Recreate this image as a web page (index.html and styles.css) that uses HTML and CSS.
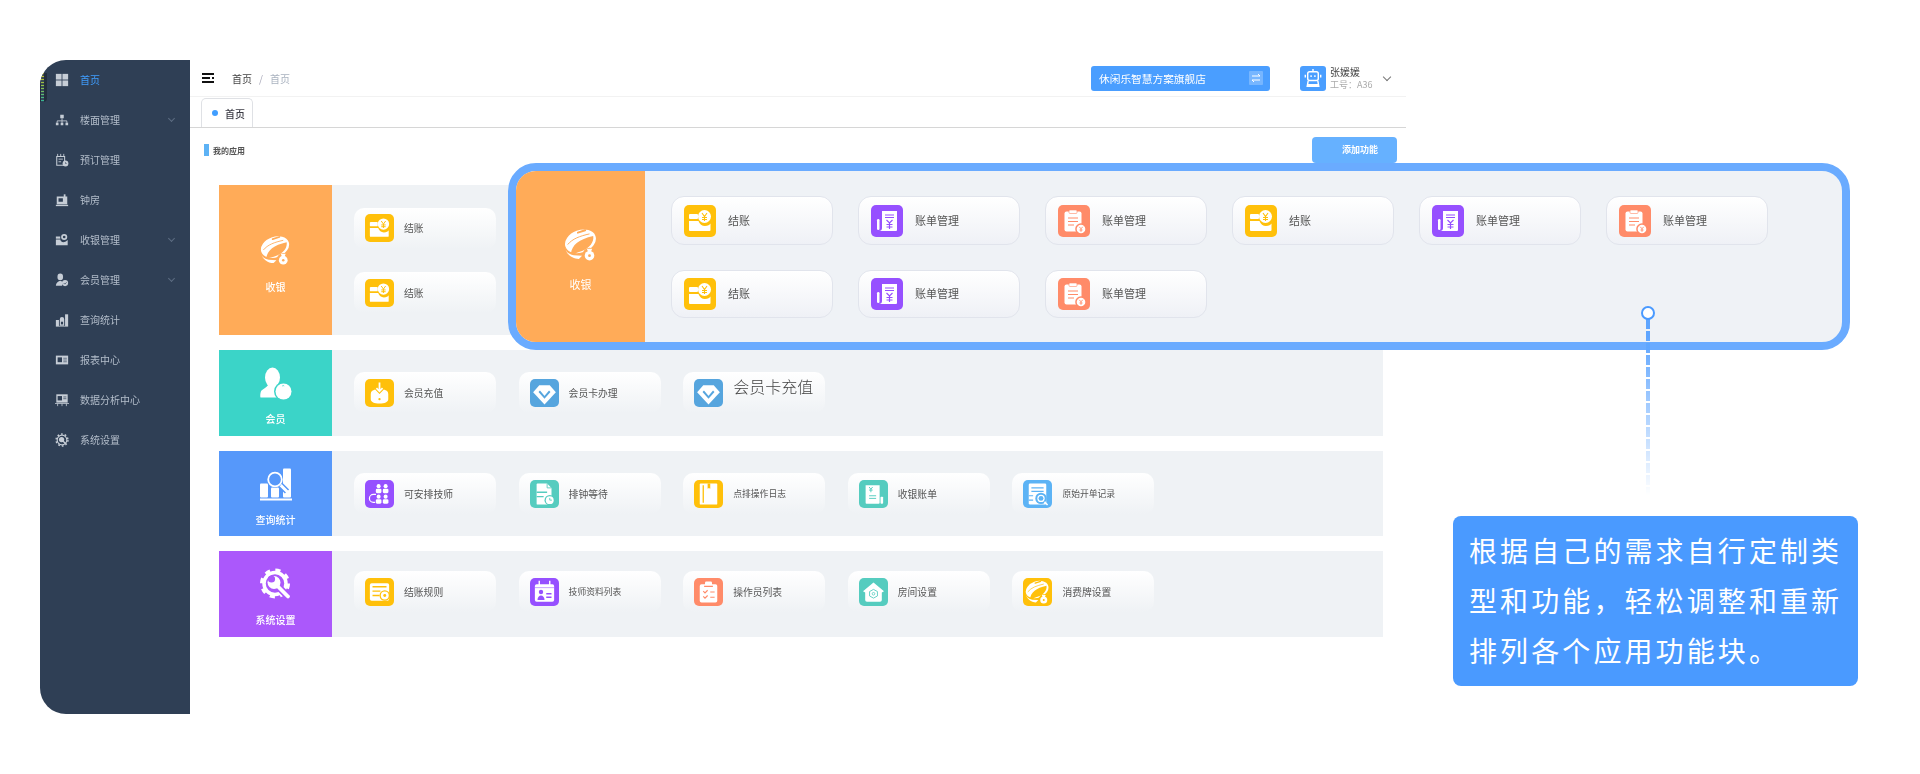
FILE: index.html
```html
<!DOCTYPE html>
<html lang="zh-CN">
<head>
<meta charset="utf-8">
<title>首页</title>
<link rel="stylesheet" href="styles.css">
</head>
<body>
<svg class="defs" xmlns="http://www.w3.org/2000/svg">
  <symbol id="wallet" viewBox="0 0 32 32">
    <rect x="5" y="9" width="9" height="5" rx="1" fill="#fff"/>
    <path d="M5 16h9.500c1 3 3.500 5 6.500 5s4.500-1 5.500-2.500V25a1 1 0 0 1-1 1H6a1 1 0 0 1-1-1z" fill="#fff"/>
    <circle cx="20.500" cy="11.500" r="6.500" fill="#fff"/>
    <path d="M18 8l2.500 3.500L23 8M20.500 11.500V16M18 12.500h5M18 14.500h5" fill="none" stroke="currentColor" stroke-width="1.100"/>
  </symbol>
  <symbol id="bill" viewBox="0 0 32 32">
    <path d="M11 6h15v19a1 1 0 0 1-1 1H8c2 0 3-1 3-3z" fill="#fff"/>
    <rect x="6" y="14" width="2.500" height="11" rx="1.200" fill="#fff"/>
    <path d="M14 10h9M14 12.500h9M15.500 15l3 3 3-3M18.500 18v6M15.500 19.500h6M15.500 22h6" fill="none" stroke="currentColor" stroke-width="1.200"/>
  </symbol>
  <symbol id="clip" viewBox="0 0 32 32">
    <rect x="6.500" y="6.500" width="17" height="20" rx="2" fill="#fff"/>
    <rect x="11" y="5" width="8" height="3.500" rx="1" fill="#fff" stroke="currentColor" stroke-width=".6"/>
    <path d="M10 13h10M10 16.500h10M10 20h6" stroke="currentColor" stroke-width="1.200"/>
    <circle cx="23" cy="24" r="5.800" fill="currentColor"/>
    <circle cx="23" cy="24" r="4.300" fill="#fff"/>
    <path d="M21.300 21.800l1.700 2 1.700-2M23 23.800v3M21.500 25h3" fill="none" stroke="currentColor" stroke-width=".9"/>
  </symbol>
  <symbol id="bracelet" viewBox="0 0 32 32">
    <ellipse cx="15.500" cy="13.500" rx="15" ry="10.500" transform="rotate(-20 15.500 13.500)" fill="#fff"/>
    <path d="M6.500 25C7.500 17 14 11.500 27.500 8.500 28.500 14 24 20 17 22.500 13 24 10 25 6.500 25z" fill="currentColor"/>
    <path d="M3.500 16.500C8 11 15 8.500 24 6.500" fill="none" stroke="currentColor" stroke-width=".9"/>
    <rect x="12" y="3.300" width="9" height="1.800" rx=".9" transform="rotate(-18 16.500 4.200)" fill="currentColor"/>
    <path d="M1 19c.5 4 3 6.500 8 7.500l8 .5-3 3C8 30 2 26 1 19z" fill="#fff"/>
    <circle cx="24" cy="26" r="6.500" fill="currentColor"/>
    <circle cx="24" cy="27" r="4.500" fill="#fff"/>
    <path d="M21.500 20.500h5l-1.200 3h-2.600z" fill="#fff"/>
    <circle cx="24" cy="27" r="1.300" fill="currentColor"/>
  </symbol>
  <symbol id="member" viewBox="0 0 32 32">
    <ellipse cx="12.500" cy="10" rx="7.500" ry="10" fill="#fff"/>
    <path d="M.5 30c-.5-2 0-6 1-7 2-2 5-3 7-6h8c1 1 2 2 3 2-2 3-3 7-1 11z" fill="#fff"/>
    <circle cx="23.500" cy="24" r="9.500" fill="currentColor"/>
    <circle cx="23.500" cy="24" r="8" fill="#fff"/>
    <path d="M22.200 18.500a1.500 1.500 0 0 1 2 0" stroke="currentColor" fill="none" stroke-width=".8"/>
  </symbol>
  <symbol id="chartmag" viewBox="0 0 32 32">
    <rect x="0" y="15" width="8" height="14" rx="1" fill="#fff"/>
    <rect x="11" y="19" width="8" height="10" rx="1" fill="#fff"/>
    <rect x="23" y="0" width="8" height="29" rx="1" fill="#fff"/>
    <rect x="0" y="30" width="32" height="2" fill="#fff"/>
    <path d="M20 16l7 7" stroke="currentColor" stroke-width="6"/>
    <path d="M20 16l7 7" stroke="#fff" stroke-width="3" stroke-linecap="round"/>
    <circle cx="15" cy="11" r="8" fill="currentColor"/>
    <circle cx="15" cy="11" r="6.800" fill="none" stroke="#fff" stroke-width="1.800"/>
  </symbol>
  <symbol id="gear" viewBox="0 0 32 32">
    <circle cx="15" cy="15" r="11" fill="none" stroke="#fff" stroke-width="3.500"/>
    <circle cx="15" cy="15" r="13" fill="none" stroke="#fff" stroke-width="4" stroke-dasharray="5 5.200"/>
    <path d="M19 19l9 9" stroke="currentColor" stroke-width="7"/>
    <path d="M18 18l10 10" stroke="#fff" stroke-width="3.800" stroke-linecap="round"/>
    <circle cx="14" cy="14" r="6.500" fill="#fff"/>
    <circle cx="11.500" cy="10.500" r="3.600" fill="currentColor"/>
  </symbol>
  <symbol id="tray" viewBox="0 0 32 32">
    <path d="M6 17c0-3 2-4 5-5l5 5 5-5c3 1 5 2 5 5v6c0 3-4 5-10 5s-10-2-10-5z" fill="#fff"/>
    <path d="M16 4v10M12.500 10.500L16 14l3.500-3.500" fill="none" stroke="#fff" stroke-width="2"/>
    <circle cx="16" cy="23" r="1.300" fill="currentColor"/>
  </symbol>
  <symbol id="diamond" viewBox="0 0 32 32">
    <path d="M10 7h12l7 8-13 14L3 15z" fill="#fff"/>
    <path d="M10 14l6 7 6-7" fill="none" stroke="currentColor" stroke-width="2.200"/>
  </symbol>
  <symbol id="people" viewBox="0 0 32 32">
    <g fill="#fff">
      <circle cx="15" cy="7" r="2.300"/><circle cx="23" cy="7" r="2.300"/>
      <rect x="11.800" y="10" width="6.400" height="5" rx="1.500"/><rect x="19.800" y="10" width="6.400" height="5" rx="1.500"/>
      <circle cx="15" cy="19" r="2.300"/><circle cx="23" cy="19" r="2.300"/>
      <rect x="11.800" y="22" width="6.400" height="5" rx="1.500"/><rect x="19.800" y="22" width="6.400" height="5" rx="1.500"/>
    </g>
    <path d="M12 16.500H9a4.500 4.500 0 0 0 0 9h2" fill="none" stroke="#fff" stroke-width="1.400"/>
  </symbol>
  <symbol id="docclock" viewBox="0 0 32 32">
    <path d="M8 4h11l5 5v18a1 1 0 0 1-1 1H8a1 1 0 0 1-1-1V5a1 1 0 0 1 1-1z" fill="#fff"/>
    <path d="M19 4v5h5" fill="none" stroke="currentColor" stroke-width="1"/>
    <path d="M7 14h12M7 19h8" stroke="currentColor" stroke-width="1.600"/>
    <circle cx="22" cy="23" r="6" fill="currentColor"/>
    <circle cx="22" cy="23" r="4.500" fill="#fff"/>
    <path d="M22 20.500V23h2.500" fill="none" stroke="currentColor" stroke-width="1"/>
  </symbol>
  <symbol id="cardmark" viewBox="0 0 32 32">
    <rect x="6" y="4" width="20" height="24" rx="1" fill="#fff"/>
    <path d="M10 6v20" stroke="currentColor" stroke-width="1.500"/>
    <path d="M15 4h3v6l-1.500-1-1.500 1z" fill="currentColor"/>
  </symbol>
  <symbol id="receipt" viewBox="0 0 32 32">
    <path d="M7 6h16v20a1 1 0 0 1-1 1H8a1 1 0 0 1-1-1z" fill="#fff"/>
    <rect x="24" y="19" width="3" height="8" rx="1" fill="#fff"/>
    <path d="M11 8l2 2.500 2-2.500M13 10.500V14M11 11.500h4M11 18h8M11 21h8" fill="none" stroke="currentColor" stroke-width="1.100"/>
  </symbol>
  <symbol id="docsearch" viewBox="0 0 32 32">
    <rect x="6" y="4" width="20" height="24" rx="1.500" fill="#fff"/>
    <path d="M9 9h14M9 13h14M6 18h5M6 23h5" stroke="currentColor" stroke-width="1.300"/>
    <circle cx="20" cy="21" r="6.500" fill="currentColor"/>
    <circle cx="20" cy="21" r="4.200" fill="#fff"/>
    <circle cx="20" cy="21" r="2.800" fill="currentColor"/>
    <path d="M24 25l3.500 3.500" stroke="#fff" stroke-width="1.800"/>
  </symbol>
  <symbol id="listcoin" viewBox="0 0 32 32">
    <rect x="5" y="6" width="22" height="20" rx="2" fill="#fff"/>
    <path d="M8 10h16M8 15h9M8 20h8" stroke="currentColor" stroke-width="1.600"/>
    <circle cx="22" cy="20" r="6" fill="currentColor"/>
    <circle cx="22" cy="20" r="4.500" fill="#fff"/>
    <circle cx="22" cy="20" r="1.700" fill="currentColor"/>
  </symbol>
  <symbol id="calperson" viewBox="0 0 32 32">
    <rect x="5" y="7" width="22" height="20" rx="2" fill="#fff"/>
    <path d="M10 3v8M22 3v8" stroke="#fff" stroke-width="1.600"/>
    <path d="M5 11h22" stroke="currentColor" stroke-width=".6"/>
    <circle cx="12" cy="16" r="2.500" fill="currentColor"/>
    <path d="M8 25c0-3 2-5 4-5s4 2 4 5z" fill="currentColor"/>
    <path d="M18 18h6M18 22h6" stroke="currentColor" stroke-width="1.500"/>
  </symbol>
  <symbol id="clipcheck" viewBox="0 0 32 32">
    <rect x="6" y="7" width="20" height="21" rx="2" fill="#fff"/>
    <rect x="12" y="4" width="8" height="5" rx="1.500" fill="#fff"/>
    <path d="M10 15l2 2 3-3M10 21l2 2 3-3M18 16h5M18 22h5M11 9.500h10" fill="none" stroke="currentColor" stroke-width="1.300"/>
  </symbol>
  <symbol id="house" viewBox="0 0 32 32">
    <path d="M16 5L28 15l-2.500 1.500V25a2 2 0 0 1-2 2h-15a2 2 0 0 1-2-2v-8.500L4 15z" fill="#fff"/>
    <path d="M16 13l4.500 2.500v5L16 23l-4.500-2.500v-5z" fill="none" stroke="currentColor" stroke-width="1"/>
    <circle cx="16" cy="18" r="1.500" fill="none" stroke="currentColor" stroke-width=".9"/>
  </symbol>
  <symbol id="grid" viewBox="0 0 16 16">
    <rect x="1" y="1" width="6.500" height="6.500" fill="currentColor"/><rect x="8.500" y="1" width="6.500" height="6.500" fill="currentColor"/>
    <rect x="1" y="8.500" width="6.500" height="6.500" fill="currentColor"/><rect x="8.500" y="8.500" width="6.500" height="6.500" fill="currentColor"/>
  </symbol>
  <symbol id="org" viewBox="0 0 16 16">
    <rect x="6" y="2" width="4" height="4" fill="currentColor"/>
    <path d="M8 6v3M2.500 11V9h11v2M8 9v2" fill="none" stroke="currentColor"/>
    <rect x="1" y="11" width="3" height="3" fill="currentColor"/><rect x="6.500" y="11" width="3" height="3" fill="currentColor"/><rect x="12" y="11" width="3" height="3" fill="currentColor"/>
  </symbol>
  <symbol id="book" viewBox="0 0 16 16">
    <path d="M2 4h9v10H2z" fill="none" stroke="currentColor" stroke-width="1.200"/>
    <path d="M3 1v3M6.500 1v3M10 1v3M4 7h5M4 10h3" stroke="currentColor"/>
    <circle cx="12" cy="12" r="3.300" fill="currentColor"/>
    <path d="M12 10.500V12h1.300" fill="none" stroke="#2f3f55" stroke-width=".7"/>
  </symbol>
  <symbol id="room" viewBox="0 0 16 16">
    <rect x="2" y="4" width="12" height="9" fill="currentColor"/>
    <rect x="4" y="6" width="5" height="4" fill="#2f3f55"/>
    <rect x="10" y="1.500" width="2" height="4" fill="currentColor"/>
    <rect x="1" y="13.500" width="14" height="1.500" fill="currentColor"/>
  </symbol>
  <symbol id="mwallet" viewBox="0 0 16 16">
    <rect x="1" y="4" width="5" height="2.500" fill="currentColor"/>
    <path d="M1 7.500h5c.5 2 2 3 3.500 3s3-.8 5-2.500v6H1z" fill="currentColor"/>
    <circle cx="10.500" cy="4.500" r="3.500" fill="currentColor"/>
    <circle cx="10.500" cy="4.500" r="1.500" fill="#2f3f55"/>
  </symbol>
  <symbol id="muser" viewBox="0 0 16 16">
    <ellipse cx="6" cy="4.500" rx="3.200" ry="3.800" fill="currentColor"/>
    <path d="M1 14.500c0-3 2-4.500 4-5.500h2l2 1.500-1 4z" fill="currentColor"/>
    <circle cx="11.500" cy="11.500" r="3.500" fill="currentColor"/>
    <path d="M10 11.500l1.200 1.200 2-2" fill="none" stroke="#2f3f55" stroke-width=".8"/>
  </symbol>
  <symbol id="mchart" viewBox="0 0 16 16">
    <rect x="1" y="8" width="3.500" height="7" fill="currentColor"/>
    <path d="M5.500 14.500V7a2.500 2.500 0 0 1 5 0v7.500z" fill="currentColor"/>
    <rect x="6.800" y="10" width="2.400" height="3" fill="#2f3f55"/>
    <rect x="11.500" y="1.500" width="3.500" height="13.500" fill="currentColor"/>
    <path d="M1 15.200h14" stroke="currentColor" stroke-width=".8"/>
  </symbol>
  <symbol id="report" viewBox="0 0 16 16">
    <rect x="1" y="3" width="14" height="10" fill="currentColor"/>
    <rect x="3" y="5" width="5" height="5.500" fill="#2f3f55"/>
    <path d="M9.500 6h4M9.500 8h4M9.500 10h4" stroke="#2f3f55" stroke-width=".7"/>
  </symbol>
  <symbol id="analysis" viewBox="0 0 16 16">
    <rect x="1.500" y="1.500" width="13" height="9.500" fill="currentColor"/>
    <rect x="3" y="3.500" width="5" height="5" fill="#2f3f55"/>
    <path d="M9.500 4.500h3.500M9.500 6.500h3.500" stroke="#2f3f55" stroke-width=".8"/>
    <path d="M0 12h16M3 12v3M8 12v3M13 12v3" stroke="currentColor" stroke-width=".9"/>
  </symbol>
  <symbol id="cog" viewBox="0 0 16 16">
    <circle cx="8" cy="8" r="5.500" fill="none" stroke="currentColor" stroke-width="1.300"/>
    <circle cx="8" cy="8" r="6.800" fill="none" stroke="currentColor" stroke-width="1.600" stroke-dasharray="2 2.300"/>
    <circle cx="7.500" cy="7.500" r="3" fill="currentColor"/>
    <path d="M8 8l4.500 4.500" stroke="currentColor" stroke-width="1.600"/>
  </symbol>
  <symbol id="robot" viewBox="0 0 26 26">
    <rect x="7.500" y="6" width="11" height="9" rx="2" fill="none" stroke="#fff" stroke-width="1.500"/>
    <path d="M13 3v3M5 9v3M21 9v3M8 19.500h10M8 15.500l-1 5.500h12l-1-5.500" fill="none" stroke="#fff" stroke-width="1.500"/>
    <circle cx="11" cy="10.500" r="1" fill="#fff"/><circle cx="15" cy="10.500" r="1" fill="#fff"/>
  </symbol>
</svg>

<div class="app">
  <aside class="sidebar">
    <div class="meter"></div>
    <nav>
      <a class="nav-item is-active"><svg class="nav-ico"><use href="#grid"/></svg><span>首页</span></a>
      <a class="nav-item"><svg class="nav-ico"><use href="#org"/></svg><span>楼面管理</span><i class="nav-arrow"></i></a>
      <a class="nav-item"><svg class="nav-ico"><use href="#book"/></svg><span>预订管理</span></a>
      <a class="nav-item"><svg class="nav-ico"><use href="#room"/></svg><span>钟房</span></a>
      <a class="nav-item"><svg class="nav-ico"><use href="#mwallet"/></svg><span>收银管理</span><i class="nav-arrow"></i></a>
      <a class="nav-item"><svg class="nav-ico"><use href="#muser"/></svg><span>会员管理</span><i class="nav-arrow"></i></a>
      <a class="nav-item"><svg class="nav-ico"><use href="#mchart"/></svg><span>查询统计</span></a>
      <a class="nav-item"><svg class="nav-ico"><use href="#report"/></svg><span>报表中心</span></a>
      <a class="nav-item"><svg class="nav-ico"><use href="#analysis"/></svg><span>数据分析中心</span></a>
      <a class="nav-item"><svg class="nav-ico"><use href="#cog"/></svg><span>系统设置</span></a>
    </nav>
  </aside>

  <main class="main">
    <header class="topbar">
      <div class="hamburger"><i></i><i class="hamburger-mid"></i><i></i></div>
      <div class="crumbs"><b>首页</b><em>/</em><span>首页</span></div>
      <div class="store">
        <span>休闲乐智慧方案旗舰店</span>
        <svg class="swap" viewBox="0 0 14 14"><rect width="14" height="14" rx="1" fill="#fff" opacity=".25"/><path d="M3 5h8L9 3M11 9H3l2 2" fill="none" stroke="#fff" stroke-width="1"/></svg>
      </div>
      <div class="avatar"><svg class="avatar-ico"><use href="#robot"/></svg></div>
      <div class="user"><strong>张媛媛</strong><small>工号：A36</small></div>
      <i class="user-arrow"></i>
    </header>

    <div class="tabs">
      <div class="tab"><i></i>首页</div>
    </div>

    <div class="toolbar">
      <div class="title"><i></i>我的应用</div>
      <button class="add">添加功能</button>
    </div>

    <section class="groups">
      <div class="group">
        <div class="side side-orange side-tall"><svg class="side-ico"><use href="#bracelet"/></svg><span>收银</span></div>
        <div class="cards cards-stack">
          <div class="card"><span class="ico c-yellow"><svg><use href="#wallet"/></svg></span>结账</div>
          <div class="card"><span class="ico c-yellow"><svg><use href="#wallet"/></svg></span>结账</div>
        </div>
      </div>

      <div class="group">
        <div class="side side-teal"><svg class="side-ico"><use href="#member"/></svg><span>会员</span></div>
        <div class="cards">
          <div class="card"><span class="ico c-yellow"><svg><use href="#tray"/></svg></span>会员充值</div>
          <div class="card"><span class="ico c-steel"><svg><use href="#diamond"/></svg></span>会员卡办理</div>
          <div class="card"><span class="ico c-steel"><svg><use href="#diamond"/></svg></span><span class="big-label">会员卡充值</span></div>
        </div>
      </div>

      <div class="group">
        <div class="side side-blue"><svg class="side-ico"><use href="#chartmag"/></svg><span>查询统计</span></div>
        <div class="cards">
          <div class="card"><span class="ico c-purple"><svg><use href="#people"/></svg></span>可安排技师</div>
          <div class="card"><span class="ico c-teal"><svg><use href="#docclock"/></svg></span>排钟等待</div>
          <div class="card card-small"><span class="ico c-yellow"><svg><use href="#cardmark"/></svg></span>点排操作日志</div>
          <div class="card"><span class="ico c-teal"><svg><use href="#receipt"/></svg></span>收银账单</div>
          <div class="card card-small"><span class="ico c-sky"><svg><use href="#docsearch"/></svg></span>原始开单记录</div>
        </div>
      </div>

      <div class="group group-last">
        <div class="side side-purple"><svg class="side-ico"><use href="#gear"/></svg><span>系统设置</span></div>
        <div class="cards">
          <div class="card"><span class="ico c-yellow"><svg><use href="#listcoin"/></svg></span>结账规则</div>
          <div class="card card-small"><span class="ico c-purple"><svg><use href="#calperson"/></svg></span>技师资料列表</div>
          <div class="card"><span class="ico c-orange"><svg><use href="#clipcheck"/></svg></span>操作员列表</div>
          <div class="card"><span class="ico c-teal"><svg><use href="#house"/></svg></span>房间设置</div>
          <div class="card"><span class="ico c-yellow"><svg class="ico-inset"><use href="#bracelet"/></svg></span>消费牌设置</div>
        </div>
      </div>
    </section>
  </main>
</div>

<div class="panel">
  <div class="panel-side"><svg class="panel-side-ico"><use href="#bracelet"/></svg><span>收银</span></div>
  <div class="panel-cards">
    <div class="pcard"><span class="pico c-yellow"><svg><use href="#wallet"/></svg></span><span class="plabel">结账</span></div>
    <div class="pcard"><span class="pico c-purple"><svg><use href="#bill"/></svg></span><span class="plabel">账单管理</span></div>
    <div class="pcard"><span class="pico c-orange"><svg><use href="#clip"/></svg></span><span class="plabel">账单管理</span></div>
    <div class="pcard"><span class="pico c-yellow"><svg><use href="#wallet"/></svg></span><span class="plabel">结账</span></div>
    <div class="pcard"><span class="pico c-purple"><svg><use href="#bill"/></svg></span><span class="plabel">账单管理</span></div>
    <div class="pcard"><span class="pico c-orange"><svg><use href="#clip"/></svg></span><span class="plabel">账单管理</span></div>
    <div class="pcard"><span class="pico c-yellow"><svg><use href="#wallet"/></svg></span><span class="plabel">结账</span></div>
    <div class="pcard"><span class="pico c-purple"><svg><use href="#bill"/></svg></span><span class="plabel">账单管理</span></div>
    <div class="pcard"><span class="pico c-orange"><svg><use href="#clip"/></svg></span><span class="plabel">账单管理</span></div>
  </div>
</div>

<div class="dash"></div>
<div class="pin"></div>
<div class="callout">根据自己的需求自行定制类型和功能，轻松调整和重新排列各个应用功能块。</div>
</body>
</html>
```
FILE: styles.css
```css
* { box-sizing: border-box; }
html, body { margin: 0; height: 774px; overflow: hidden; background: #fff; }
body { position: relative; font-family: "Noto Sans CJK SC", "Noto Sans", sans-serif; color: #555; }
.defs { position: absolute; width: 0; height: 0; }

.app { display: flex; width: 1366px; height: 654px; margin: 60px 0 0 40px; filter: blur(.35px); }

/* sidebar */
.sidebar { position: relative; flex: 0 0 150px; background: #2f3f55; border-radius: 26px 0 0 26px; overflow: hidden; }
.meter { position: absolute; left: 0; top: 13px; width: 7px; height: 29px; padding-left: 1px; background: #232d3c; border-radius: 0 0 4px 0; }
.meter::before { content: ""; display: block; width: 3px; height: 100%; background: repeating-linear-gradient(transparent 0 1px, rgba(47,63,85,.9) 1px 3px), linear-gradient(#c9c02f, #8fbf45 45%, #2fb59a); }
.nav-item { display: flex; align-items: center; height: 40px; padding-left: 15px; font-size: 10px; color: #b4becb; position: relative; }
.nav-item span { margin-top: -1px; }
.nav-item.is-active { color: #409eff; }
.nav-ico { width: 14px; height: 14px; margin-right: 11px; color: #c6cdd6; flex: none; }
.nav-arrow { position: absolute; left: 129px; top: 16px; width: 5px; height: 5px; border-right: 1px solid #5d6d82; border-bottom: 1px solid #5d6d82; transform: rotate(45deg); }

/* top bar */
.main { flex: 1; min-width: 0; }
.topbar { display: flex; align-items: center; height: 37px; padding: 0 16px 0 12px; border-bottom: 1px solid #f2f2f2; }
.hamburger { display: flex; flex-direction: column; justify-content: space-between; width: 12px; height: 10px; margin-right: 18px; }
.hamburger i { display: block; height: 2px; background: #111; }
.hamburger .hamburger-mid { background: linear-gradient(90deg, #111 0 8px, transparent 8px 10px, #111 10px); }
.crumbs { display: flex; align-items: center; font-size: 10px; }
.crumbs b { font-weight: 400; color: #444; }
.crumbs em { font-style: normal; color: #aab; margin: 0 7px; }
.crumbs span { color: #a9b2bf; }
.store { display: flex; align-items: center; justify-content: space-between; width: 179px; height: 25px; margin-left: auto; padding: 0 7px 0 8px; background: #4a9eff; border-radius: 3px; color: #fff; font-size: 10.700px; }
.swap { width: 14px; height: 14px; }
.avatar { width: 26px; height: 25px; margin-left: 30px; background: #4a9eff; border-radius: 3px; }
.avatar-ico { display: block; width: 26px; height: 25px; }
.user { display: flex; flex-direction: column; margin-left: 4px; width: 52px; line-height: 13px; }
.user strong { font-weight: 400; font-size: 10px; color: #444; }
.user small { font-size: 9px; color: #aaa; }
.user-arrow { width: 6px; height: 6px; margin: -2px 0 0 2px; border-right: 1px solid #777; border-bottom: 1px solid #777; transform: rotate(45deg); }

/* tabs */
.tabs { display: flex; align-items: flex-end; height: 31px; padding-left: 11px; border-bottom: 1px solid #d6d6d6; }
.tab { display: flex; align-items: center; width: 52px; height: 29px; padding-left: 10px; border: 1px solid #dfe1e5; border-bottom: 0; border-radius: 5px 5px 0 0; font-size: 10px; font-weight: 500; color: #3b3b44; }
.tab i { width: 6px; height: 6px; margin-right: 7px; border-radius: 50%; background: #409eff; }

/* toolbar */
.toolbar { display: flex; align-items: center; justify-content: space-between; height: 26px; margin-top: 9px; padding: 0 9px 0 14px; }
.title { display: flex; align-items: center; font-size: 8px; font-weight: 700; color: #555; }
.title i { width: 5px; height: 12px; margin-right: 4px; background: #5db2f5; }
.add { width: 85px; height: 26px; padding: 0 0 2px 30px; border: 0; border-radius: 4px; background: #66b1ff; color: #fff; font: 700 9px "Noto Sans CJK SC", sans-serif; text-align: left; }

/* groups */
.groups { display: flex; flex-direction: column; gap: 15px; width: 1164px; margin: 22px 0 0 29px; }
.group { display: flex; min-height: 85px; background: #eff2f5; }
.side { flex: 0 0 113px; display: flex; flex-direction: column; align-items: center; padding-top: 17px; gap: 12px; color: #fff; font-size: 10px; line-height: 14px; font-weight: 500; }
.side-tall { height: 150px; padding-top: 49px; gap: 15px; }
.side-ico { width: 32px; height: 33px; flex: none; }
.side-tall .side-ico { width: 31px; height: 31px; }
.side-orange { background: #ffab58; color: #fff; }
.side-teal { background: #3bd4c8; height: 86px; }
.side-blue { background: #5698fa; height: 85px; }
.side-purple { background: #ab58fb; height: 86px; }
.side-orange .side-ico { color: #ffab58; }
.side-teal .side-ico { color: #3bd4c8; }
.side-blue .side-ico { color: #5698fa; }
.side-purple .side-ico { color: #ab58fb; }

.cards { display: grid; grid-template-columns: repeat(5, 142px); column-gap: 22.600px; align-content: start; padding: 22px 0 0 22px; }
.cards-stack { grid-template-columns: 142px; row-gap: 23.500px; padding-top: 22.500px; }
.group-last .cards { padding-top: 20px; }
.card { display: flex; align-items: center; height: 41px; padding-left: 11px; border-radius: 10px; background: linear-gradient(#fff, #eff2f5); font-size: 9.800px; color: #555; }
.card-small { font-size: 8.800px; }
.big-label { font-size: 16px; font-weight: 300; color: #444; margin-top: -13px; }
.ico { flex: none; display: flex; align-items: center; justify-content: center; width: 29px; height: 28px; margin-right: 10px; border-radius: 5px; }
.ico svg { width: 29px; height: 28px; }
.ico .ico-inset { width: 25px; height: 25px; }
.c-yellow { background: #ffc00a; color: #ffc00a; }
.c-purple { background: #9650ff; color: #9650ff; }
.c-orange { background: #ff8b69; color: #ff8b69; }
.c-teal { background: #55ccbf; color: #55ccbf; }
.c-steel { background: #56a5de; color: #56a5de; }
.c-sky { background: #5cb3f5; color: #5cb3f5; }

/* highlighted overlay */
.panel { position: absolute; left: 508px; top: 163px; display: flex; width: 1342px; height: 187px; border: 8px solid #6aabff; border-radius: 28px; background: #eff2f6; overflow: hidden; filter: blur(.3px); }
.panel-side { flex: 0 0 129px; display: flex; flex-direction: column; align-items: center; padding-top: 56px; gap: 15px; background: #ffab58; color: #fff; font-size: 11px; line-height: 16px; }
.panel-side-ico { width: 34px; height: 34px; color: #ffab58; flex: none; }
.panel-cards { display: grid; grid-template-columns: repeat(6, 162px); grid-template-rows: 49px 48px; gap: 25px; align-content: start; padding: 25px 0 0 26px; }
.pcard { display: flex; align-items: center; padding-left: 12px; border: 1px solid #e1e4ec; border-radius: 13px; background: linear-gradient(#fff, #eff1f6); font-size: 11px; color: #555; }
.pico { flex: none; width: 32px; height: 32px; margin-right: 12px; border-radius: 5px; }
.pico svg { display: block; width: 32px; height: 32px; }
.plabel { margin-top: -2px; }

/* connector and note */
.pin { position: absolute; left: 1641px; top: 306px; width: 14px; height: 14px; border: 2px solid #4a9aff; border-radius: 50%; background: #fff; }
.dash { position: absolute; left: 1646px; top: 319px; width: 4px; height: 176px; background: repeating-linear-gradient(#5ea5ff 0 10px, transparent 10px 12px); -webkit-mask-image: linear-gradient(#000 10%, transparent); mask-image: linear-gradient(#000 10%, transparent); }
.callout { position: absolute; left: 1453px; top: 516px; width: 405px; height: 170px; padding: 9px 10px 0 16px; border-radius: 8px; background: #4a9aff; color: #fff; font-size: 28px; line-height: 50px; letter-spacing: 3.100px; }
```
